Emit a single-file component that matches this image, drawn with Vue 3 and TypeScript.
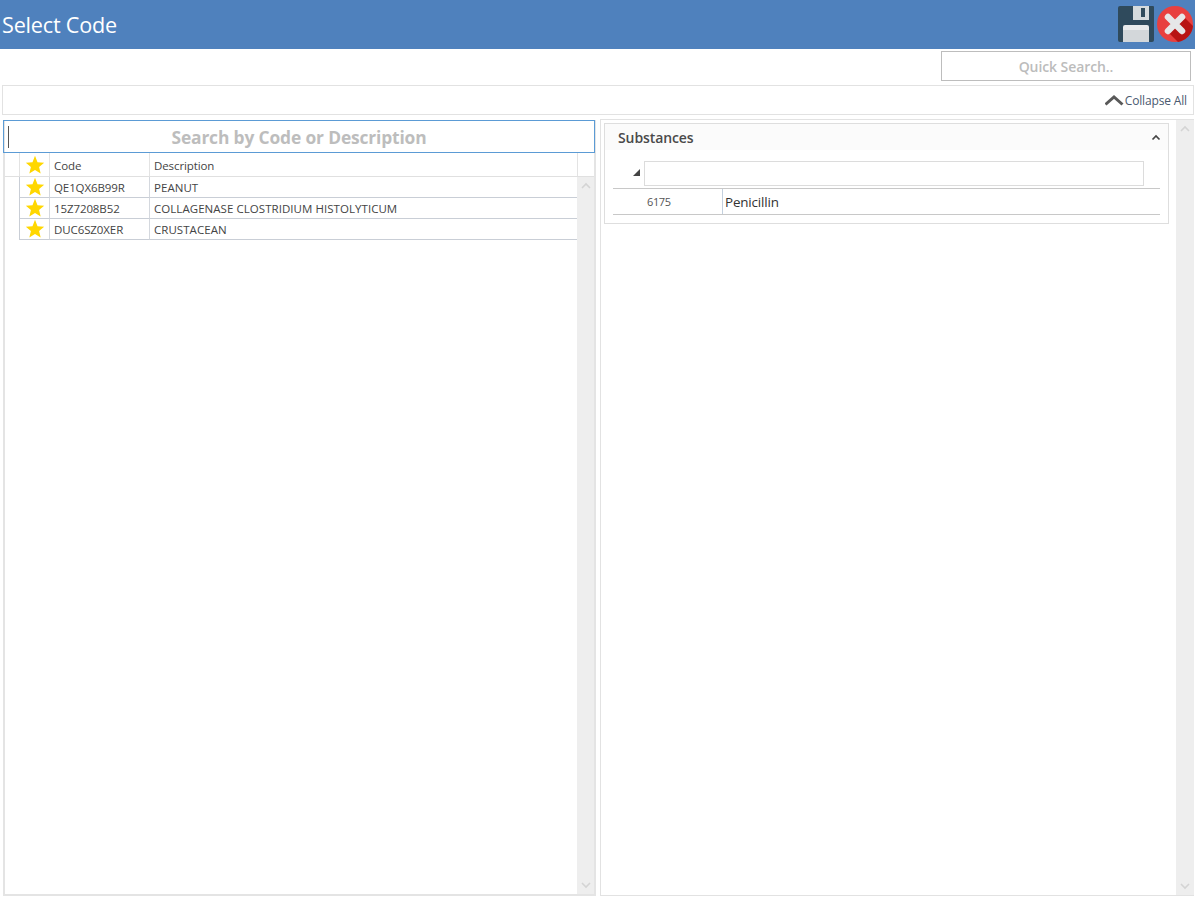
<script setup lang="ts">
const rows = [
  { code: 'QE1QX6B99R', desc: 'PEANUT' },
  { code: '15Z7208B52', desc: 'COLLAGENASE CLOSTRIDIUM HISTOLYTICUM' },
  { code: 'DUC6SZ0XER', desc: 'CRUSTACEAN' },
]
const star = '12,1 15,8.6 23,9.2 16.9,14.3 18.8,22.3 12,18 5.2,22.3 7.1,14.3 1,9.2 9,8.6'
</script>

<template>
  <div class="page">
    <header class="titlebar">
      <h1 class="title">Select Code</h1>
      <div class="actions">
        <svg class="save" width="36" height="36" viewBox="0 0 36 36">
          <path d="M2 0H35a1 1 0 0 1 1 1V34a2 2 0 0 1-2 2H2a2 2 0 0 1-2-2V2a2 2 0 0 1 2-2z" fill="#2f4a5c" />
          <rect x="15" y="0" width="16" height="14" fill="#d5dadd" />
          <rect x="23" y="2" width="4" height="9" fill="#2f4a5c" />
          <path d="M5 21a2 2 0 0 1 2-2H29a2 2 0 0 1 2 2V36H5z" fill="#e9ebec" />
          <rect x="5" y="24" width="26" height="12" fill="#d3d7da" />
        </svg>
        <svg class="close" width="36" height="36" viewBox="0 0 36 36">
          <circle cx="18" cy="18" r="18" fill="#e8403f" />
          <path d="M10 25 L21 36 A18 18 0 0 0 36 20 L26 10z" fill="#b81414" />
          <path d="M11 11 L25 25 M25 11 L11 25" stroke="#e6e7e8" stroke-width="6.5" stroke-linecap="round" />
        </svg>
      </div>
    </header>

    <div class="search-row">
      <div class="quick">Quick Search..</div>
    </div>

    <div class="collapse-bar">
      <svg width="19" height="12" viewBox="0 0 19 12">
        <path d="M0.5 10.5 L9 3 L17.5 10.5" fill="none" stroke="#595959" stroke-width="3" />
      </svg>
      <span>Collapse All</span>
    </div>

    <main class="panes">
      <section class="left">
        <div class="code-search"><i class="caret"></i><span>Search by Code or Description</span></div>
        <div class="grid-head">
          <div class="c-blank"></div>
          <div class="c-star"><svg width="20" height="20" viewBox="0 0 24 24"><polygon :points="star" fill="#ffd700" /></svg></div>
          <div class="c-code">Code</div>
          <div class="c-desc">Description</div>
          <div class="c-end"></div>
        </div>
        <div class="grid-body">
          <div class="rows">
            <div v-for="r in rows" :key="r.code" class="row">
              <div class="c-blank plain"></div>
              <div class="c-star"><svg width="20" height="20" viewBox="0 0 24 24"><polygon :points="star" fill="#ffd700" /></svg></div>
              <div class="c-code">{{ r.code }}</div>
              <div class="c-desc">{{ r.desc }}</div>
            </div>
          </div>
          <div class="scrollbar">
            <svg width="12" height="8" viewBox="0 0 12 8"><path d="M2 6 L6 2 L10 6" fill="none" stroke="#d4d4d4" stroke-width="1.6" /></svg>
            <svg width="12" height="8" viewBox="0 0 12 8"><path d="M2 2 L6 6 L10 2" fill="none" stroke="#d4d4d4" stroke-width="1.6" /></svg>
          </div>
        </div>
      </section>

      <section class="right">
        <div class="right-content">
          <div class="group">
            <div class="group-head">
              <span>Substances</span>
              <svg width="10" height="7" viewBox="0 0 10 7"><path d="M1.5 5.5 L5 2 L8.5 5.5" fill="none" stroke="#444" stroke-width="1.7" /></svg>
            </div>
            <div class="filter-row">
              <i class="tri"></i>
              <div class="filter-input"></div>
            </div>
            <div class="sub-row">
              <div class="sub-id">6175</div>
              <div class="sub-name">Penicillin</div>
            </div>
          </div>
        </div>
        <div class="scrollbar wide">
          <svg width="12" height="8" viewBox="0 0 12 8"><path d="M2 6 L6 2 L10 6" fill="none" stroke="#d4d4d4" stroke-width="1.6" /></svg>
          <svg width="12" height="8" viewBox="0 0 12 8"><path d="M2 2 L6 6 L10 2" fill="none" stroke="#d4d4d4" stroke-width="1.6" /></svg>
        </div>
      </section>
    </main>
  </div>
</template>

<style>
html, body { margin: 0; background: #fff; }
</style>

<style scoped>
* { box-sizing: border-box; }
.page {
  width: 1195px;
  height: 898px;
  display: flex;
  flex-direction: column;
  font-family: "Open Sans", "Noto Sans", "Liberation Sans", sans-serif;
  color: #444;
  overflow: hidden;
  background: #fff;
}
.titlebar {
  height: 49px;
  flex: none;
  background: #4f81bd;
  display: flex;
  align-items: center;
  justify-content: space-between;
  padding: 0 2px;
}
.title { margin: 0; font-size: 21.6px; font-weight: 400; color: #fff; letter-spacing: -0.2px; }
.actions { display: flex; align-items: center; gap: 3px; margin-top: -1px; }
.search-row { height: 36px; flex: none; display: flex; justify-content: flex-end; padding: 2px 4px 4px 0; }
.quick {
  width: 250px;
  height: 30px;
  border: 1px solid #bdbdbd;
  text-align: center;
  font-size: 14px;
  font-weight: 600;
  color: #bcbcbc;
  line-height: 30px;
  letter-spacing: -0.08px;
}
.collapse-bar {
  height: 30px;
  flex: none;
  margin: 0 1px 0 2px;
  border: 1px solid #e2e2e2;
  display: flex;
  align-items: center;
  justify-content: flex-end;
  gap: 1px;
  padding-right: 6px;
  font-size: 12px;
  color: #4a5a70;
  letter-spacing: -0.15px;
}
.panes { flex: 1; min-height: 0; display: flex; padding: 4px 0 2px 3px; gap: 4px; }
.left {
  width: 593px;
  flex: none;
  border: 2px solid #e4e4e4;
  border-top: 0;
  display: flex;
  flex-direction: column;
  margin-top: 1px;
}
.code-search {
  height: 33px;
  flex: none;
  margin: 0 -1px 0 -2px;
  width: calc(100% + 3px);
  border: 1px solid #5b9bd5;
  position: relative;
  text-align: center;
  font-size: 17.4px;
  font-weight: 700;
  color: #bdbdbd;
  line-height: 32px;
  letter-spacing: -0.15px;
}
.caret { position: absolute; left: 4px; top: 5px; width: 1px; height: 22px; background: #555; }
.grid-head, .row { display: flex; font-size: 11.5px; color: #444; letter-spacing: -0.1px; }
.grid-head { height: 24px; flex: none; border-bottom: 1px solid #e0e0e0; line-height: 25px; }
.c-blank { width: 15px; flex: none; border-right: 1px solid #e3e3e3; }
.c-blank.plain { border-right-color: #c9ced6; background: #fff; }
.c-star {
  width: 30px;
  flex: none;
  display: flex;
  align-items: center;
  justify-content: center;
  border-right: 1px solid #e3e3e3;
}
.c-code { width: 100px; flex: none; padding-left: 4px; border-right: 1px solid #e3e3e3; }
.c-desc { flex: 1; padding-left: 4px; white-space: nowrap; }
.row .c-desc { letter-spacing: 0.05px; }
.grid-head .c-desc { border-right: 1px solid #e3e3e3; }
.c-end { width: 16px; flex: none; }
.grid-body { flex: 1; min-height: 0; display: flex; }
.rows { flex: 1; }
.row { height: 21px; line-height: 22px; }
.row .c-star, .row .c-code, .row .c-desc { border-bottom: 1px solid #c9ced6; }
.row .c-star, .row .c-code { border-right-color: #d4d8de; }
.row .c-blank { border-bottom: 0; }
.scrollbar {
  width: 17px;
  flex: none;
  background: #eeeeee;
  display: flex;
  flex-direction: column;
  align-items: center;
  justify-content: space-between;
  padding: 5px 0 5px;
}
.scrollbar.wide { width: 18px; }
.right {
  flex: 1;
  min-width: 0;
  display: flex;
  border-left: 1px solid #e2e2e2;
  border-top: 1px solid #e2e2e2;
  border-bottom: 1px solid #e2e2e2;
  margin-right: 1px;
}
.right-content { flex: 1; padding: 3px 7px 0 3px; }
.group { border: 1px solid #dedede; height: 101px; }
.group-head {
  height: 26px;
  background: #fbfbfb;
  display: flex;
  align-items: center;
  justify-content: space-between;
  padding: 1px 7px 0 13px;
  font-size: 14px;
  font-weight: 600;
  color: #4a4a4a;
  letter-spacing: -0.1px;
}
.filter-row { height: 39px; margin: 0 8px; border-bottom: 1px solid #c8c8c8; display: flex; align-items: center; padding: 9px 16px 0 31px; position: relative; }
.tri {
  position: absolute;
  left: 20px;
  top: 19px;
  width: 0;
  height: 0;
  border-left: 7px solid transparent;
  border-bottom: 7px solid #444;
}
.filter-input { width: 100%; height: 25px; border: 1px solid #dcdcdc; }
.sub-row { height: 26px; margin: 0 8px; border-bottom: 1px solid #c8c8c8; display: flex; align-items: center; }
.sub-id { width: 110px; height: 100%; border-right: 1px solid #c3d0de; padding-left: 34px; font-size: 11px; line-height: 26px; color: #555; letter-spacing: -0.4px; }
.sub-name { padding-left: 2px; font-size: 13.4px; color: #333; letter-spacing: -0.15px; }
</style>
